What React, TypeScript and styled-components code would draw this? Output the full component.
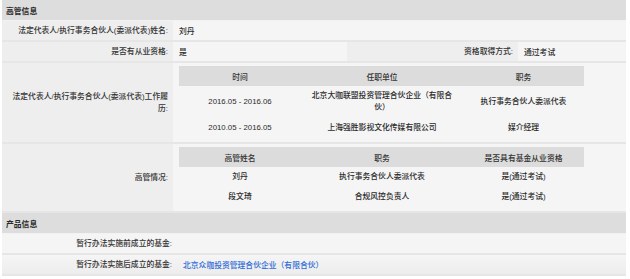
import React from "react";
import styled, { createGlobalStyle } from "styled-components";

const GlobalStyle = createGlobalStyle`
  html, body {
    margin: 0;
    padding: 0;
    background: #ffffff;
  }
  body {
    font-family: "Liberation Sans", "Noto Sans CJK SC", sans-serif;
    font-size: 7.8px;
    font-weight: 500;
    color: #2b2b2b;
  }
`;

const Page = styled.div`
  margin: 0 4px 0 2px;
  display: flex;
  flex-direction: column;
`;

const SectionHeader = styled.div`
  height: 20px;
  display: flex;
  align-items: center;
  padding-left: 4px;
  background: #dddddd;
  color: #2b2b2b;
  font-weight: bold;
  border-bottom: 1px solid #f2f2f2;
`;

const Row = styled.div<{ $cols: string; $fade?: boolean }>`
  display: grid;
  grid-template-columns: ${(p) => p.$cols};
  min-height: 19px;
  border-bottom: 2px solid #e6e6e6;
  background: ${(p) =>
    p.$fade ? "linear-gradient(#f5f5f5, #ededed)" : "#f5f5f5"};
`;

const Label = styled.div<{ $plain?: boolean }>`
  display: flex;
  align-items: center;
  justify-content: flex-end;
  text-align: right;
  padding: 0 5px 0 8px;
  line-height: 12px;
  color: #333333;
  background: ${(p) => (p.$plain ? "transparent" : "#eeeeee")};
`;

const Value = styled.div<{ $nested?: boolean }>`
  display: flex;
  align-items: center;
  padding: ${(p) => (p.$nested ? "3px 6px 4px" : "0 6px")};
  color: #2b2b2b;
`;

const Link = styled.a`
  color: #2f6bd6;
  text-decoration: none;
`;

const SubTable = styled.div`
  display: grid;
  grid-template-columns: 122px 162px 121px;
  width: 405px;
`;

const SubHead = styled.div`
  height: 20px;
  display: flex;
  align-items: center;
  justify-content: center;
  background: #dcdcdc;
  color: #333333;
`;

const SubCell = styled.div`
  min-height: 12px;
  padding: 4px 8px;
  line-height: 12px;
  display: flex;
  align-items: center;
  justify-content: center;
  text-align: center;
  color: #2b2b2b;
`;

const LABEL = "171px";

type SubTableData = { heads: string[]; rows: string[][] };

const history: SubTableData = {
  heads: ["时间", "任职单位", "职务"],
  rows: [
    ["2016.05 - 2016.06", "北京大咖联盟投资管理合伙企业（有限合伙）", "执行事务合伙人委派代表"],
    ["2010.05 - 2016.05", "上海强胜影视文化传媒有限公司", "媒介经理"],
  ],
};

const managers: SubTableData = {
  heads: ["高管姓名", "职务", "是否具有基金从业资格"],
  rows: [
    ["刘丹", "执行事务合伙人委派代表", "是(通过考试)"],
    ["段文琦", "合规风控负责人", "是(通过考试)"],
  ],
};

function Grid({ data }: { data: SubTableData }) {
  return (
    <SubTable>
      {data.heads.map((h) => (
        <SubHead key={h}>{h}</SubHead>
      ))}
      {data.rows.map((r, i) =>
        r.map((c, j) => <SubCell key={`${i}-${j}`}>{c}</SubCell>)
      )}
    </SubTable>
  );
}

export default function App() {
  return (
    <>
      <GlobalStyle />
      <Page>
        <SectionHeader>高管信息</SectionHeader>
        <Row $cols={`${LABEL} 1fr`}>
          <Label>法定代表人/执行事务合伙人(委派代表)姓名:</Label>
          <Value>刘丹</Value>
        </Row>
        <Row $cols={`${LABEL} 174px 171px 1fr`}>
          <Label>是否有从业资格:</Label>
          <Value>是</Value>
          <Label>资格取得方式:</Label>
          <Value>通过考试</Value>
        </Row>
        <Row $cols={`${LABEL} 1fr`}>
          <Label>法定代表人/执行事务合伙人(委派代表)工作履历:</Label>
          <Value $nested>
            <Grid data={history} />
          </Value>
        </Row>
        <Row $cols={`${LABEL} 1fr`}>
          <Label>高管情况:</Label>
          <Value $nested>
            <Grid data={managers} />
          </Value>
        </Row>

        <SectionHeader>产品信息</SectionHeader>
        <Row $cols="175px 1fr">
          <Label $plain>暂行办法实施前成立的基金:</Label>
          <Value />
        </Row>
        <Row $cols="175px 1fr" $fade>
          <Label $plain>暂行办法实施后成立的基金:</Label>
          <Value>
            <Link href="#">北京众咖投资管理合伙企业（有限合伙）</Link>
          </Value>
        </Row>
      </Page>
    </>
  );
}
